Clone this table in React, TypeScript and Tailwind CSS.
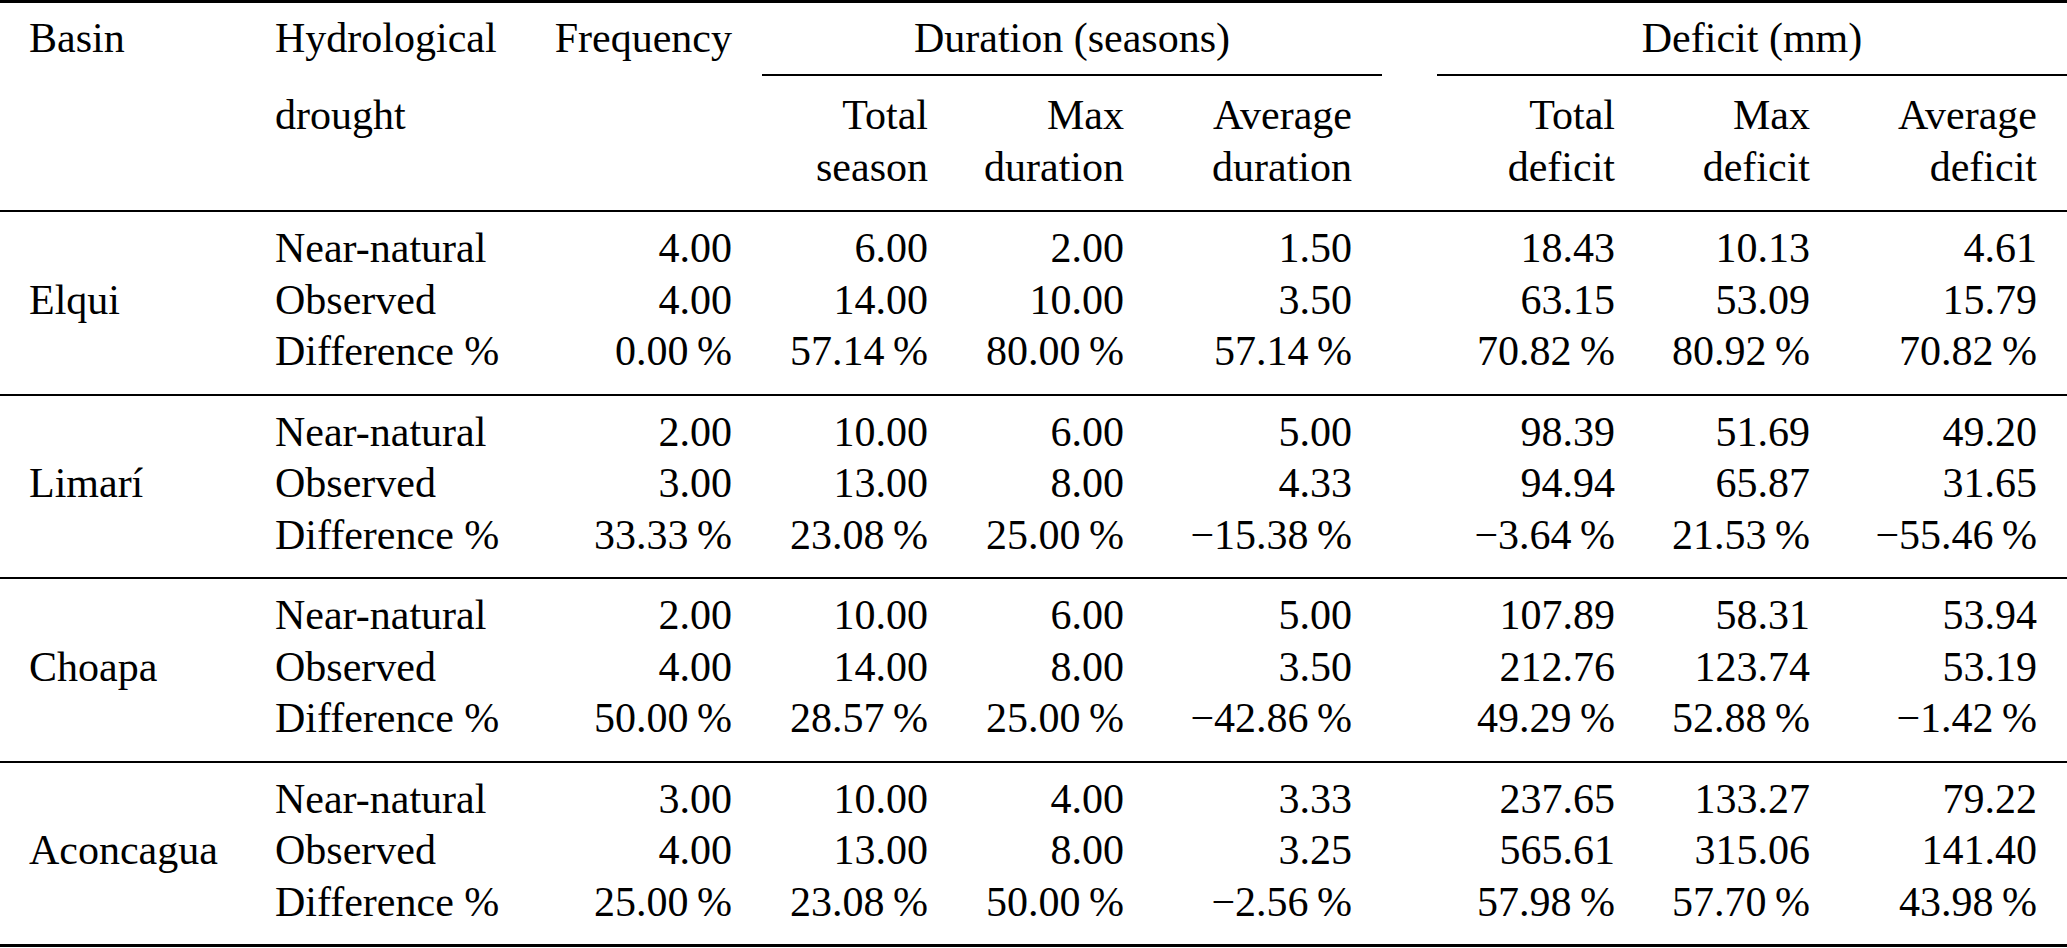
const groups = [
  {
    basin: "Elqui",
    rows: [
      ["4.00", "6.00", "2.00", "1.50", "18.43", "10.13", "4.61"],
      ["4.00", "14.00", "10.00", "3.50", "63.15", "53.09", "15.79"],
      ["0.00\u2009%", "57.14\u2009%", "80.00\u2009%", "57.14\u2009%", "70.82\u2009%", "80.92\u2009%", "70.82\u2009%"],
    ],
  },
  {
    basin: "Limarí",
    rows: [
      ["2.00", "10.00", "6.00", "5.00", "98.39", "51.69", "49.20"],
      ["3.00", "13.00", "8.00", "4.33", "94.94", "65.87", "31.65"],
      ["33.33\u2009%", "23.08\u2009%", "25.00\u2009%", "\u221215.38\u2009%", "\u22123.64\u2009%", "21.53\u2009%", "\u221255.46\u2009%"],
    ],
  },
  {
    basin: "Choapa",
    rows: [
      ["2.00", "10.00", "6.00", "5.00", "107.89", "58.31", "53.94"],
      ["4.00", "14.00", "8.00", "3.50", "212.76", "123.74", "53.19"],
      ["50.00\u2009%", "28.57\u2009%", "25.00\u2009%", "\u221242.86\u2009%", "49.29\u2009%", "52.88\u2009%", "\u22121.42\u2009%"],
    ],
  },
  {
    basin: "Aconcagua",
    rows: [
      ["3.00", "10.00", "4.00", "3.33", "237.65", "133.27", "79.22"],
      ["4.00", "13.00", "8.00", "3.25", "565.61", "315.06", "141.40"],
      ["25.00\u2009%", "23.08\u2009%", "50.00\u2009%", "\u22122.56\u2009%", "57.98\u2009%", "57.70\u2009%", "43.98\u2009%"],
    ],
  },
];

const labels = ["Near-natural", "Observed", "Difference %"];

// fixed column grid: basin | drought | freq | 3x duration | gap | 3x deficit
const cols =
  "grid grid-cols-[245px_282px_235px_196px_196px_228px_55px_208px_195px_227px]";

function Num({ v }: { v: string }) {
  return <div className="whitespace-nowrap pr-[30px] text-right">{v}</div>;
}

function Group({ basin, rows, last }: { basin: string; rows: string[][]; last: boolean }) {
  return (
    <div
      className={`${cols} border-black pt-[11px] pb-[16px] ${
        last ? "border-b-[3px]" : "border-b-2"
      }`}
    >
      <div className="row-span-3 flex items-center whitespace-nowrap pl-[29px]">{basin}</div>
      {rows.map((r, i) => (
        <div key={i} className="contents">
          <div className="whitespace-nowrap pl-[30px]">{labels[i]}</div>
          <Num v={r[0]} />
          <Num v={r[1]} />
          <Num v={r[2]} />
          <Num v={r[3]} />
          <div />
          <Num v={r[4]} />
          <Num v={r[5]} />
          <Num v={r[6]} />
        </div>
      ))}
    </div>
  );
}

export default function App() {
  return (
    <div className="min-h-screen bg-white text-black">
      <div className="w-[2067px] font-[family-name:'Liberation_Serif','Times_New_Roman',serif] text-[42px] leading-[51.5px]">
        <div className="border-t-[3px] border-black">
          {/* header row 1 */}
          <div className={cols}>
            <div className="whitespace-nowrap pt-[10px] pl-[29px]">Basin</div>
            <div className="whitespace-nowrap pt-[10px] pl-[30px]">Hydrological</div>
            <div className="whitespace-nowrap pt-[10px] pr-[30px] text-right">Frequency</div>
            <div className="col-span-3 border-b-2 border-black pt-[10px] pb-[9.5px] text-center whitespace-nowrap">
              Duration (seasons)
            </div>
            <div />
            <div className="col-span-3 border-b-2 border-black pt-[10px] pb-[9.5px] text-center whitespace-nowrap">
              Deficit (mm)
            </div>
          </div>
          {/* header row 2 */}
          <div className={`${cols} border-b-2 border-black pt-[14px] pb-[17px]`}>
            <div />
            <div className="whitespace-nowrap pl-[30px]">drought</div>
            <div />
            <div className="pr-[30px] text-right">Total<br />season</div>
            <div className="pr-[30px] text-right">Max<br />duration</div>
            <div className="pr-[30px] text-right">Average<br />duration</div>
            <div />
            <div className="pr-[30px] text-right">Total<br />deficit</div>
            <div className="pr-[30px] text-right">Max<br />deficit</div>
            <div className="pr-[30px] text-right">Average<br />deficit</div>
          </div>
        </div>
        {groups.map((g, i) => (
          <Group key={g.basin} basin={g.basin} rows={g.rows} last={i === groups.length - 1} />
        ))}
      </div>
    </div>
  );
}
